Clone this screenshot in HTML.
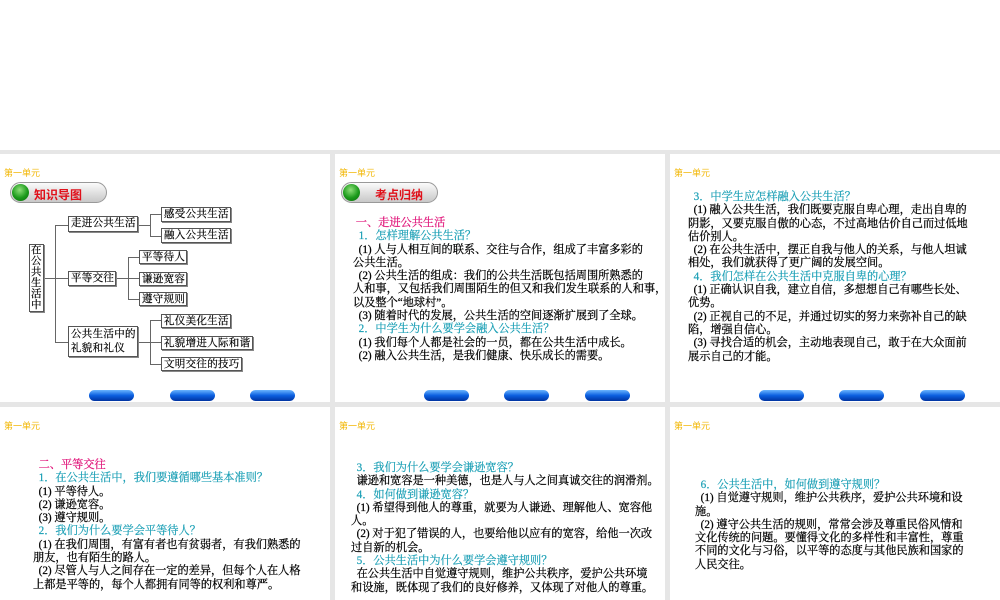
<!DOCTYPE html>
<html><head><meta charset="utf-8"><style>
*{margin:0;padding:0;box-sizing:border-box}
body{width:1000px;height:600px;position:relative;background:#e6e6e6;overflow:hidden;font-family:"Liberation Serif","Noto Serif CJK SC","Noto Sans CJK SC",serif;}
.top{position:absolute;left:0;top:0;width:1000px;height:150px;background:#fff}
.s{position:absolute;background:#fff;overflow:hidden}
.u{position:absolute;left:4px;top:12px;font-size:9px;color:#f2b705;font-family:"Liberation Sans","Noto Sans CJK SC",sans-serif}
.pill{position:absolute;width:97px;height:21px;border:1px solid #999;border-radius:11px;background:linear-gradient(#fbfbfb,#dcdcdc 60%,#c8c8c8)}
.pill .c{position:absolute;left:1px;top:1px;width:17px;height:17px;border-radius:50%;background:radial-gradient(circle at 45% 35%,#8fe07a,#1b9a1b 55%,#0a6a0a)}
.pill span{position:absolute;top:3px;font-size:12px;font-weight:bold;color:#e0101a;font-family:"Liberation Sans","Noto Sans CJK SC",sans-serif}
.t{position:absolute;font-size:11.2px;line-height:13.3px;color:#000;white-space:nowrap;-webkit-text-stroke:0.25px #000}
.r{color:#e0157a;-webkit-text-stroke:0.25px #e0157a}.b{color:#1a9fb5;-webkit-text-stroke:0.2px #1a9fb5}
.bx{position:absolute;border:1px solid #555;box-shadow:1px 1px 0 #888;font-size:10.5px;line-height:12px;padding:1px 2px;white-space:nowrap;letter-spacing:0.3px;background:#fff;-webkit-text-stroke:0.2px #000;overflow:hidden}
.ln{position:absolute;background:#666}
.btn{position:absolute;width:45px;height:11px;border-radius:6px;background:linear-gradient(#6ab4ff,#0b5fe0 50%,#0033a0);}
</style></head><body>
<div class="top"></div>

<!-- slide 1 -->
<div class="s" style="left:0;top:154px;width:330px;height:248px">
<div class="u">第一单元</div>
<div class="pill" style="left:10px;top:28px"><div class="c"></div><span style="left:23px">知识导图</span></div>
<div class="ln" style="left:43px;top:124px;width:12px;height:1px"></div>
<div class="ln" style="left:55px;top:71px;width:1px;height:117px"></div>
<div class="ln" style="left:55px;top:71px;width:13px;height:1px"></div>
<div class="ln" style="left:55px;top:124px;width:13px;height:1px"></div>
<div class="ln" style="left:55px;top:188px;width:13px;height:1px"></div>
<div class="ln" style="left:137px;top:71px;width:13px;height:1px"></div>
<div class="ln" style="left:150px;top:60px;width:1px;height:22px"></div>
<div class="ln" style="left:150px;top:60px;width:11px;height:1px"></div>
<div class="ln" style="left:150px;top:82px;width:11px;height:1px"></div>
<div class="ln" style="left:116px;top:124px;width:12px;height:1px"></div>
<div class="ln" style="left:128px;top:103px;width:1px;height:42px"></div>
<div class="ln" style="left:128px;top:103px;width:11px;height:1px"></div>
<div class="ln" style="left:128px;top:124px;width:11px;height:1px"></div>
<div class="ln" style="left:128px;top:145px;width:11px;height:1px"></div>
<div class="ln" style="left:137px;top:188px;width:13px;height:1px"></div>
<div class="ln" style="left:150px;top:166px;width:1px;height:44px"></div>
<div class="ln" style="left:150px;top:166px;width:11px;height:1px"></div>
<div class="ln" style="left:150px;top:188px;width:11px;height:1px"></div>
<div class="ln" style="left:150px;top:210px;width:11px;height:1px"></div>
<div class="bx" style="left:29px;top:90px;width:15px;height:68px;padding:0 1px;font-size:10.5px;line-height:11px;white-space:normal;letter-spacing:0">在公共生活中</div>
<div class="bx" style="left:68px;top:62px;width:70px;height:16px">走进公共生活</div>
<div class="bx" style="left:68px;top:117px;width:48px;height:15px">平等交往</div>
<div class="bx" style="left:68px;top:172px;width:70px;height:31px;line-height:14px">公共生活中的<br>礼貌和礼仪</div>
<div class="bx" style="left:161px;top:53px;width:70px;height:15px">感受公共生活</div>
<div class="bx" style="left:161px;top:74px;width:70px;height:15px">融入公共生活</div>
<div class="bx" style="left:139px;top:96px;width:48px;height:14px">平等待人</div>
<div class="bx" style="left:139px;top:118px;width:48px;height:14px">谦逊宽容</div>
<div class="bx" style="left:139px;top:138px;width:48px;height:14px">遵守规则</div>
<div class="bx" style="left:161px;top:160px;width:70px;height:14px">礼仪美化生活</div>
<div class="bx" style="left:161px;top:182px;width:92px;height:14px">礼貌增进人际和谐</div>
<div class="bx" style="left:161px;top:203px;width:81px;height:14px">文明交往的技巧</div>
<div class="btn" style="left:89px;top:236px"></div><div class="btn" style="left:170px;top:236px"></div><div class="btn" style="left:250px;top:236px"></div>
</div>

<!-- slide 2 -->
<div class="s" style="left:335px;top:154px;width:330px;height:248px">
<div class="u">第一单元</div>
<div class="pill" style="left:6px;top:28px"><div class="c"></div><span style="left:33px">考点归纳</span></div>
<div class="t" style="left:18px;top:63px"><span class="r">&nbsp;一、走进公共生活</span><br><span class="b">&nbsp;&nbsp;1．怎样理解公共生活？</span><br>&nbsp;&nbsp;(1) 人与人相互间的联系、交往与合作，组成了丰富多彩的<br>公共生活。<br>&nbsp;&nbsp;(2) 公共生活的组成：我们的公共生活既包括周围所熟悉的<br>人和事，又包括我们周围陌生的但又和我们发生联系的人和事，<br>以及整个“地球村”。<br>&nbsp;&nbsp;(3) 随着时代的发展，公共生活的空间逐渐扩展到了全球。<br><span class="b">&nbsp;&nbsp;2．中学生为什么要学会融入公共生活？</span><br>&nbsp;&nbsp;(1) 我们每个人都是社会的一员，都在公共生活中成长。<br>&nbsp;&nbsp;(2) 融入公共生活，是我们健康、快乐成长的需要。</div>
<div class="btn" style="left:89px;top:236px"></div><div class="btn" style="left:169px;top:236px"></div><div class="btn" style="left:250px;top:236px"></div>
</div>

<!-- slide 3 -->
<div class="s" style="left:670px;top:154px;width:330px;height:248px">
<div class="u">第一单元</div>
<div class="t" style="left:18px;top:37px"><span class="b">&nbsp;&nbsp;3．中学生应怎样融入公共生活？</span><br>&nbsp;&nbsp;(1) 融入公共生活，我们既要克服自卑心理，走出自卑的<br>阴影，又要克服自傲的心态，不过高地估价自己而过低地<br>估价别人。<br>&nbsp;&nbsp;(2) 在公共生活中，摆正自我与他人的关系，与他人坦诚<br>相处，我们就获得了更广阔的发展空间。<br><span class="b">&nbsp;&nbsp;4．我们怎样在公共生活中克服自卑的心理？</span><br>&nbsp;&nbsp;(1) 正确认识自我，建立自信，多想想自己有哪些长处、<br>优势。<br>&nbsp;&nbsp;(2) 正视自己的不足，并通过切实的努力来弥补自己的缺<br>陷，增强自信心。<br>&nbsp;&nbsp;(3) 寻找合适的机会，主动地表现自己，敢于在大众面前<br>展示自己的才能。</div>
<div class="btn" style="left:89px;top:236px"></div><div class="btn" style="left:169px;top:236px"></div><div class="btn" style="left:250px;top:236px"></div>
</div>

<!-- row 2 -->
<div class="s" style="left:0;top:407px;width:330px;height:193px">
<div class="u">第一单元</div>
<div class="t" style="left:33px;top:52px"><span class="r">&nbsp;&nbsp;二、平等交往</span><br><span class="b">&nbsp;&nbsp;1．在公共生活中，我们要遵循哪些基本准则？</span><br>&nbsp;&nbsp;(1) 平等待人。<br>&nbsp;&nbsp;(2) 谦逊宽容。<br>&nbsp;&nbsp;(3) 遵守规则。<br><span class="b">&nbsp;&nbsp;2．我们为什么要学会平等待人？</span><br>&nbsp;&nbsp;(1) 在我们周围，有富有者也有贫弱者，有我们熟悉的<br>朋友，也有陌生的路人。<br>&nbsp;&nbsp;(2) 尽管人与人之间存在一定的差异，但每个人在人格<br>上都是平等的，每个人都拥有同等的权利和尊严。</div>
</div>
<div class="s" style="left:335px;top:407px;width:330px;height:193px">
<div class="u">第一单元</div>
<div class="t" style="left:16px;top:55px"><span class="b">&nbsp;&nbsp;3．我们为什么要学会谦逊宽容？</span><br>&nbsp;&nbsp;谦逊和宽容是一种美德，也是人与人之间真诚交往的润滑剂。<br><span class="b">&nbsp;&nbsp;4．如何做到谦逊宽容？</span><br>&nbsp;&nbsp;(1) 希望得到他人的尊重，就要为人谦逊、理解他人、宽容他<br>人。<br>&nbsp;&nbsp;(2) 对于犯了错误的人，也要给他以应有的宽容，给他一次改<br>过自新的机会。<br><span class="b">&nbsp;&nbsp;5．公共生活中为什么要学会遵守规则？</span><br>&nbsp;&nbsp;在公共生活中自觉遵守规则，维护公共秩序，爱护公共环境<br>和设施，既体现了我们的良好修养，又体现了对他人的尊重。</div>
</div>
<div class="s" style="left:670px;top:407px;width:330px;height:193px">
<div class="u">第一单元</div>
<div class="t" style="left:25px;top:72px"><span class="b">&nbsp;&nbsp;6．公共生活中，如何做到遵守规则？</span><br>&nbsp;&nbsp;(1) 自觉遵守规则，维护公共秩序，爱护公共环境和设<br>施。<br>&nbsp;&nbsp;(2) 遵守公共生活的规则，常常会涉及尊重民俗风情和<br>文化传统的问题。要懂得文化的多样性和丰富性，尊重<br>不同的文化与习俗，以平等的态度与其他民族和国家的<br>人民交往。</div>
</div>
</body></html>
